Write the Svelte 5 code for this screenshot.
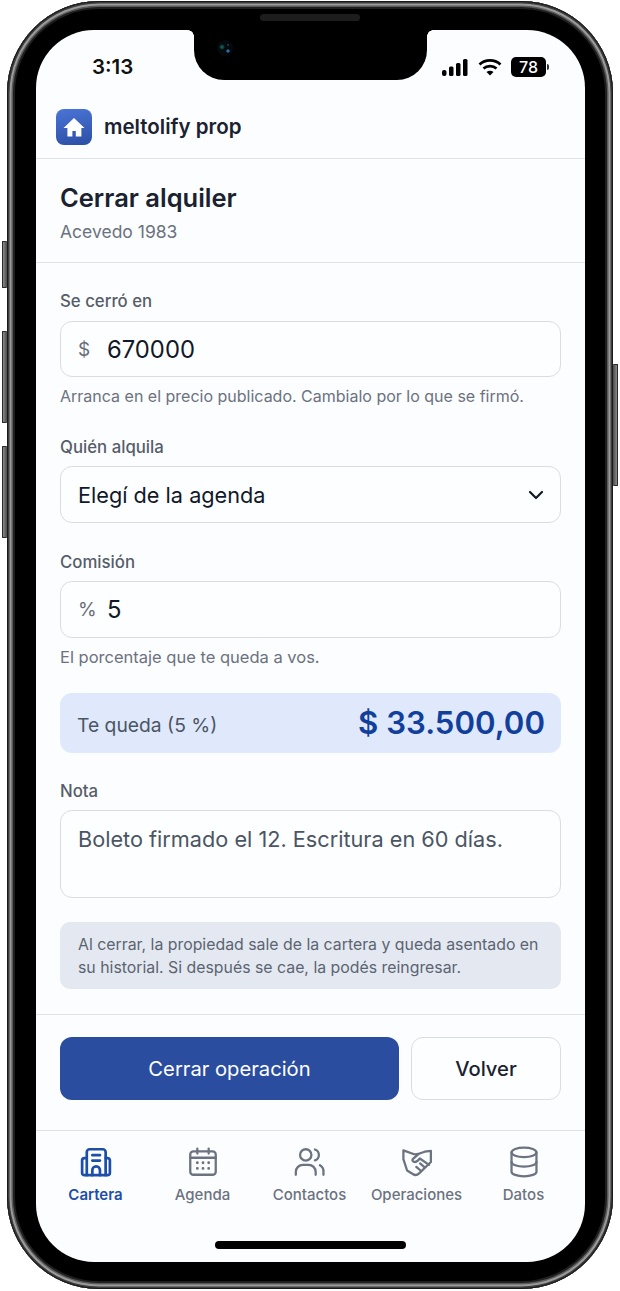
<script>
  const tabs = [
    { label: 'Cartera', icon: 'building', active: true },
    { label: 'Agenda', icon: 'calendar' },
    { label: 'Contactos', icon: 'users' },
    { label: 'Operaciones', icon: 'handshake' },
    { label: 'Datos', icon: 'database' }
  ];
</script>

<div class="stage">
  <div class="phone">
    <span class="btn mute"></span>
    <span class="btn volup"></span>
    <span class="btn voldown"></span>
    <span class="btn power"></span>
    <span class="speaker"></span>
    <div class="screen">
      <div class="notch"><span class="camera"></span></div>
      <div class="status">
        <span class="time">3:13</span>
        <div class="indicators">
          <svg width="28" height="18" viewBox="0 0 28 18" fill="#000">
            <rect x="1" y="12" width="4.5" height="6" rx="2"/>
            <rect x="8" y="8.500" width="4.500" height="9.500" rx="1.500"/>
            <rect x="15" y="5" width="4.500" height="13" rx="1.500"/>
            <rect x="22" y="1" width="4.500" height="17" rx="1.500"/>
          </svg>
          <svg width="24" height="18" viewBox="0 0 24 18" fill="none" stroke="#000" stroke-width="2.800">
            <path d="M1.500 6.500C7.500 1 16.500 1 22.500 6.500"/>
            <path d="M5.500 10.500C9 7.300 15 7.300 18.500 10.500"/>
            <path d="M12 17.500L8.500 14C10.500 12.400 13.500 12.400 15.500 14Z" fill="#000" stroke="none"/>
          </svg>
          <div class="battery"><span class="level">78</span><span class="nub"></span></div>
        </div>
      </div>

      <header class="brand">
        <span class="logo">
          <svg width="22" height="20" viewBox="0 0 22 20" fill="#fff">
            <path d="M11 1L0.500 11H4.400V19.500H9.400V14H12.800V19.500H18.400V11H21.500Z"/>
          </svg>
        </span>
        <span class="brand-name">meltolify prop</span>
      </header>

      <section class="title">
        <h1>Cerrar alquiler</h1>
        <p>Acevedo 1983</p>
      </section>

      <form class="form">
        <div class="field first">
          <span class="label">Se cerró en</span>
          <div class="input"><span class="prefix">$</span><span class="value">670000</span></div>
          <span class="hint">Arranca en el precio publicado. Cambialo por lo que se firmó.</span>
        </div>
        <div class="field quien">
          <span class="label">Quién alquila</span>
          <div class="input select">
            <span class="value small">Elegí de la agenda</span>
            <svg width="16" height="10" viewBox="0 0 16 10" fill="none" stroke="#111827" stroke-width="2.200" stroke-linecap="round" stroke-linejoin="round"><path d="M2 2L8 8L14 2"/></svg>
          </div>
        </div>
        <div class="field comision">
          <span class="label">Comisión</span>
          <div class="input"><span class="prefix pct">%</span><span class="value">5</span></div>
          <span class="hint">El porcentaje que te queda a vos.</span>
        </div>
        <div class="result">
          <span>Te queda (5 %)</span>
          <strong>$ 33.500,00</strong>
        </div>
        <div class="field nota">
          <span class="label">Nota</span>
          <div class="textarea">Boleto firmado el 12. Escritura en 60 días.</div>
        </div>
        <div class="notice">Al cerrar, la propiedad sale de la cartera y queda asentado en su historial. Si después se cae, la podés reingresar.</div>
      </form>

      <div class="actions">
        <button type="button" class="primary">Cerrar operación</button>
        <button type="button" class="secondary">Volver</button>
      </div>

      <nav class="tabs">
        {#each tabs as tab}
          <div class="tab" class:active={tab.active}>
            <svg width="34" height="34" viewBox="0 0 24 24" fill="none" stroke="currentColor" stroke-width={tab.active ? 1.9 : 1.6} stroke-linecap="round" stroke-linejoin="round">
              {#if tab.icon === 'building'}
                <path d="M5.500 21.300V5a2 2 0 0 1 2-2h9.300a2 2 0 0 1 2 2v16.300"/>
                <path d="M5.500 9.200H3.800A1.600 1.600 0 0 0 2.200 10.800V19.700A1.600 1.600 0 0 0 3.800 21.300H20.200A1.600 1.600 0 0 0 21.800 19.700V10.800A1.600 1.600 0 0 0 20.200 9.200H18.800"/>
                <path d="M9.400 7.200h5.400M9.400 11h5.400M9.400 21.300v-3.500a2.700 2.700 0 0 1 5.400 0v3.500"/>
              {:else if tab.icon === 'calendar'}
                <rect x="3" y="4.500" width="18" height="16.500" rx="2.200"/>
                <path d="M3 9h18M8 2.500v3.500M16 2.500v3.500"/>
                <path d="M8 12.500h.01M12 12.500h.01M16 12.500h.01M8 16.500h.01M12 16.500h.01M16 16.500h.01" stroke-width="2"/>
              {:else if tab.icon === 'users'}
                <circle cx="9" cy="7" r="4"/>
                <path d="M2 21v-2a5 5 0 0 1 5-5h4a5 5 0 0 1 5 5v2"/>
                <path d="M15.500 3.200a4 4 0 0 1 0 7.600M19 14.300a5 5 0 0 1 2.500 4.700v2"/>
              {:else if tab.icon === 'handshake'}
                <path d="M2.400 3.800L10 6.500C12 7 14 6 17.600 4.700L21.800 4.200V12L13.500 20C12 21.500 10.500 21.500 9 20.500L5 18L2.400 10Z"/>
                <path d="M13 6.500L9 10C8 11.500 10.500 13 12.500 11L14 9.500L20.500 14"/>
                <path d="M17 15.500L14.200 13M14.500 18L11.500 15.500"/>
              {:else}
                <ellipse cx="12" cy="5.200" rx="8.800" ry="3.400"/>
                <path d="M3.200 5.200v13.600c0 1.800 3.900 3.300 8.800 3.300s8.800-1.500 8.800-3.300v-13.600"/>
                <path d="M3.200 12c0 1.800 3.900 3.300 8.800 3.300s8.800-1.500 8.800-3.300"/>
              {/if}
            </svg>
            <span>{tab.label}</span>
          </div>
        {/each}
      </nav>
      <div class="home-row"><span class="home"></span></div>
    </div>
  </div>
</div>

<style>
  :global(body) { margin: 0; background: #fff; }
  .stage { width: 620px; height: 1291px; padding: 1px 7px 2px 7px; box-sizing: border-box; font-family: Inter, "Liberation Sans", sans-serif; }
  .phone {
    position: relative; width: 606px; height: 1288px; box-sizing: border-box;
    padding: 29px 28px 27px 29px; background: #000; border-radius: 92px;
    box-shadow: inset 0 0 0 1px #1a1a1a, inset 0 0 0 2.500px #3c3c3c, inset 0 0 0 4.500px #9a9a9a, inset 0 0 0 6px #5a5a5a, inset 0 0 0 8px #1f1f1f;
  }
  .btn { position: absolute; width: 5px; box-sizing: border-box; background: linear-gradient(90deg, #8a8a8a, #4a4a4a); border: 1px solid #2a2a2a; border-right: 0; border-radius: 1px; }
  .mute { left: -5px; top: 240px; height: 47px; }
  .volup { left: -5px; top: 330px; height: 92px; }
  .voldown { left: -5px; top: 445px; height: 92px; }
  .power { right: -5px; top: 363px; height: 122px; background: linear-gradient(90deg, #4a4a4a, #8a8a8a); border: 1px solid #2a2a2a; border-left: 0; }
  .speaker { position: absolute; left: 253px; top: 13px; width: 100px; height: 7px; border-radius: 4px; background: #1d1d1d; }
  .screen {
    position: relative; width: 549px; height: 1232px; overflow: hidden;
    background: #fcfdfe; border-radius: 58px; color: #111827; display: flex; flex-direction: column;
  }
  .notch { position: absolute; left: 158px; top: 0; width: 233px; height: 50px; background: #000; border-radius: 0 0 30px 30px; }
  .notch::before, .notch::after { content: ""; position: absolute; top: 0; width: 6px; height: 6px; }
  .notch::before { left: -6px; background: radial-gradient(circle at 0 100%, transparent 5.500px, #000 6px); }
  .notch::after { right: -6px; background: radial-gradient(circle at 100% 100%, transparent 5.500px, #000 6px); }
  .camera {
    position: absolute; left: 23px; top: 10px; width: 16px; height: 16px; border-radius: 50%;
    background:
      radial-gradient(circle at 11px 11px, #2a6fb0 0, #2a6fb0 1.200px, transparent 2px),
      radial-gradient(circle at 11px 5px, #1d5a80 0, transparent 1.500px),
      radial-gradient(circle at 5px 7px, #0f5a4a 0, #0f5a4a 1px, transparent 3px),
      #06090c;
  }
  .status { height: 73px; box-sizing: border-box; padding: 24px 36px 0 56px; display: flex; justify-content: space-between; align-items: flex-start; }
  .time { font-size: 20.500px; font-weight: 600; line-height: 26px; color: #111; }
  .indicators { display: flex; align-items: center; gap: 9px; height: 26px; }
  .battery { display: flex; align-items: center; gap: 1px; }
  .level { width: 35px; height: 20px; border-radius: 5px; background: #000; color: #fff; font-size: 16px; font-weight: 500; line-height: 20px; text-align: center; }
  .nub { width: 2px; height: 6px; background: #333; border-radius: 0 2px 2px 0; }
  .brand { height: 56px; box-sizing: border-box; padding: 6px 20px 0; display: flex; align-items: flex-start; gap: 12px; border-bottom: 1px solid #dfe3e8; }
  .logo { width: 36px; height: 36px; border-radius: 8px; background: linear-gradient(170deg, #4a74d6, #2c4fa5); display: flex; align-items: center; justify-content: center; }
  .brand-name { font-size: 20.500px; font-weight: 600; line-height: 36px; color: #1a2230; }
  .title { height: 104px; box-sizing: border-box; padding: 22px 24px 0; border-bottom: 1px solid #dfe3e8; }
  h1 { margin: 0; font-size: 25.500px; font-weight: 600; line-height: 34px; color: #1a2230; }
  .title p { margin: 5px 0 0; font-size: 17.500px; line-height: 24px; color: #6b7280; }
  .form { padding: 0 24px; display: flex; flex-direction: column; flex: 1; }
  .field { display: flex; flex-direction: column; }
  .field.first { margin-top: 26px; }
  .field.quien { margin-top: 29px; }
  .field.comision { margin-top: 27px; }
  .field.nota { margin-top: 26px; }
  .label { font-size: 16.800px; font-weight: 500; line-height: 24px; color: #565d6a; margin-bottom: 7px; }
  .first .label { margin-bottom: 8px; }
  .input { height: 56px; box-sizing: border-box; border: 1.500px solid #d9dde3; border-radius: 12px; padding: 0 17px; display: flex; align-items: center; background: #fdfeff; }
  .comision .input { height: 57px; }
  .input.select { justify-content: space-between; height: 57px; padding-right: 16px; }
  .prefix { width: 29px; font-size: 19px; color: #6a6e76; }
  .value { font-size: 23.800px; color: #111827; }
  .value.small { font-size: 21.700px; }
  .hint { font-size: 16px; line-height: 20px; color: #6b7280; margin-top: 9px; }
  .comision .hint { font-size: 16.500px; }
  .result { margin-top: 26px; height: 60px; box-sizing: border-box; padding: 0 16px 0 17px; background: #dfe9fb; border-radius: 12px; display: flex; align-items: center; justify-content: space-between; }
  .result span { font-size: 19.300px; color: #4b5563; margin-top: 4px; }
  .result strong { font-size: 31.200px; font-weight: 600; color: #123f9c; }
  .textarea { height: 88px; box-sizing: border-box; border: 1.500px solid #d9dde3; border-radius: 12px; padding: 13px 17px; font-size: 21.700px; line-height: 30px; color: #4b5563; background: #fdfeff; }
  .notice { margin-top: 24px; padding: 11px 18px; background: #e4e8f0; border-radius: 10px; font-size: 15.850px; line-height: 23px; color: #5b6472; height: 67px; box-sizing: border-box; }
  .actions { height: 117px; box-sizing: border-box; border-top: 1px solid #dfe3e8; border-bottom: 1px solid #dfe3e8; padding: 22px 24px 0; display: flex; gap: 12px; align-items: flex-start; }
  button { font-family: inherit; font-size: 20.200px; height: 63px; border-radius: 12px; }
  .primary { width: 339px; border: 0; background: #2a4d9f; color: #fff; }
  .secondary { width: 150px; border: 1.500px solid #d8dde4; background: #fdfeff; color: #1a2230; font-weight: 500; }
  .tabs { display: flex; padding-top: 14px; height: 131px; box-sizing: border-box; }
  .tab { width: 107px; display: flex; flex-direction: column; align-items: center; color: #6b7280; font-size: 15px; font-weight: 500; }
  .tab:first-child { margin-left: 6px; }
  .tab span { margin-top: 5px; line-height: 22px; }
  .tab.active { color: #1d4ea8; }
  .tab.active span { font-weight: 600; }
  .home-row { position: absolute; left: 0; right: 0; bottom: 13px; display: flex; justify-content: center; }
  .home { width: 191px; height: 8px; border-radius: 4px; background: #000; }
</style>
